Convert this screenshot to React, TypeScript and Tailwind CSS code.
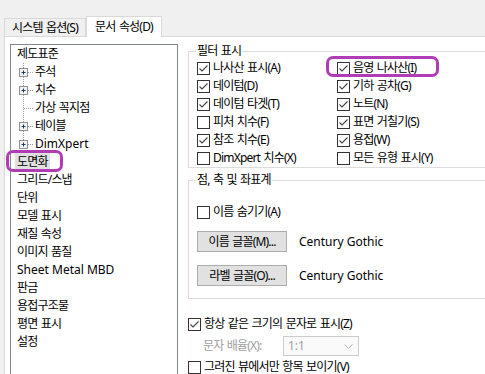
import React from 'react';

const KO = 'tracking-[-0.8px] [word-spacing:1px]';

type Item = { label: string; level: number; plus?: boolean; last?: boolean; latin?: boolean; selected?: boolean };

const tree: Item[] = [
  { label: '제도표준', level: 0 },
  { label: '주석', level: 1, plus: true },
  { label: '치수', level: 1, plus: true },
  { label: '가상 꼭지점', level: 1 },
  { label: '테이블', level: 1, plus: true },
  { label: 'DimXpert', level: 1, plus: true, last: true, latin: true },
  { label: '도면화', level: 0, selected: true },
  { label: '그리드/스냅', level: 0 },
  { label: '단위', level: 0 },
  { label: '모델 표시', level: 0 },
  { label: '재질 속성', level: 0 },
  { label: '이미지 품질', level: 0 },
  { label: 'Sheet Metal MBD', level: 0, latin: true },
  { label: '판금', level: 0 },
  { label: '용접구조물', level: 0 },
  { label: '평면 표시', level: 0 },
  { label: '설정', level: 0 },
];

const filterLeft: [string, boolean][] = [
  ['나사산 표시(A)', true],
  ['데이텀(D)', true],
  ['데이텀 타겟(T)', true],
  ['피처 치수(F)', false],
  ['참조 치수(E)', true],
  ['DimXpert 치수(X)', false],
];

const filterRight: [string, boolean][] = [
  ['음영 나사산(I)', true],
  ['기하 공차(G)', true],
  ['노트(N)', true],
  ['표면 거칠기(S)', true],
  ['용접(W)', true],
  ['모든 유형 표시(Y)', false],
];

const Check = ({ checked }: { checked?: boolean }) => (
  <span className="w-[13px] h-[13px] border border-[#333333] bg-white flex items-center justify-center shrink-0">
    {checked && (
      <svg width="11" height="11" viewBox="0 0 11 11">
        <polyline points="1.5,5.5 4,8 9.5,2.5" fill="none" stroke="#444" strokeWidth="1.1" />
      </svg>
    )}
  </span>
);

const CheckRow = ({ label, checked }: { label: string; checked?: boolean }) => (
  <div className="h-[18px] flex items-center gap-[3px]">
    <Check checked={checked} />
    <span className={KO}>{label}</span>
  </div>
);

const Connector = ({ plus, last }: { plus?: boolean; last?: boolean }) => (
  <svg width="24" height="18" className="shrink-0">
    <line x1="12.5" y1="0" x2="12.5" y2={last ? 9 : 18} stroke="#a0a0a0" strokeDasharray="1 1" />
    <line x1={plus ? 17 : 13} y1="9.5" x2="23" y2="9.5" stroke="#a0a0a0" strokeDasharray="1 1" />
    {plus && (
      <>
        <rect x="8.5" y="5.5" width="8" height="8" fill="#f2f2f2" stroke="#919191" />
        <path d="M10.5 9.5h4M12.5 7.5v4" stroke="#1e3c66" />
      </>
    )}
  </svg>
);

const FontButton = ({ label }: { label: string }) => (
  <div className="flex items-center">
    <div className={`w-[90px] h-[21px] bg-[#e1e1e1] border border-[#adadad] flex items-center justify-center ${KO}`}>
      {label}
    </div>
    <span className="ml-[12px]">Century Gothic</span>
  </div>
);

export default function App() {
  return (
    <div className="w-[485px] h-[374px] bg-[#f0f0f0] overflow-hidden relative flex flex-col text-[12px] text-black font-['Noto_Sans','Noto_Sans_CJK_KR',sans-serif]">
      {/* tabs */}
      <div className="h-[36px] flex items-end pl-[4px] shrink-0">
        <div className={`w-[82px] h-[18px] border border-b-0 border-[#d9d9d9] bg-[#f0f0f0] flex items-center justify-center ${KO}`}>
          시스템 옵션(S)
        </div>
        <div className={`relative z-10 -mb-px w-[76px] h-[21px] border border-b-0 border-[#d9d9d9] bg-white flex items-center justify-center ${KO}`}>
          문서 속성(D)
        </div>
      </div>

      {/* page */}
      <div className="flex-1 ml-[4px] border-l border-t border-[#d9d9d9] bg-white flex">
        {/* tree */}
        <div className="ml-[5px] mt-[7px] w-[168px] h-[400px] shrink-0 border border-[#828790]">
          {tree.map((it) => (
            <div key={it.label} className={`h-[18px] flex items-center ${it.level === 0 ? 'pl-[6px]' : ''}`}>
              {it.level === 1 && <Connector plus={it.plus} last={it.last} />}
              <span className={`${it.latin ? '' : KO} ${it.selected ? 'bg-[#e0e0e0] -ml-[2px] px-[2px]' : ''}`}>
                {it.label}
              </span>
            </div>
          ))}
        </div>

        {/* right side */}
        <div className="ml-[10px] w-[330px] shrink-0 flex flex-col">
          <fieldset className="mt-[6px] border border-[#dcdcdc]">
            <legend className={`ml-[7px] px-[1px] leading-[16px] ${KO}`}>필터 표시</legend>
            <div className="pl-[8px] grid grid-cols-[140px_1fr]">
              <div className="flex flex-col">
                {filterLeft.map(([l, c]) => (
                  <CheckRow key={l} label={l} checked={c} />
                ))}
              </div>
              <div className="flex flex-col">
                {filterRight.map(([l, c]) => (
                  <CheckRow key={l} label={l} checked={c} />
                ))}
              </div>
            </div>
          </fieldset>

          <fieldset className="mt-[4px] border border-[#dcdcdc] pb-[12px]">
            <legend className={`ml-[7px] px-[1px] leading-[16px] ${KO}`}>점, 축 및 좌표계</legend>
            <div className="pl-[8px] flex flex-col">
              <div className="mt-[15px]">
                <CheckRow label="이름 숨기기(A)" />
              </div>
              <div className="mt-[10px]">
                <FontButton label="이름 글꼴(M)..." />
              </div>
              <div className="mt-[13px]">
                <FontButton label="라벨 글꼴(O)..." />
              </div>
            </div>
          </fieldset>

          <div className="mt-[16px]">
            <CheckRow label="항상 같은 크기의 문자로 표시(Z)" checked />
          </div>
          <div className="mt-[3px] h-[20px] pl-[15px] flex items-center">
            <span className={`w-[80px] text-[#a0a0a0] ${KO}`}>문자 배율(X):</span>
            <div className="w-[76px] h-[20px] border border-[#cccccc] bg-[#fafafa] flex items-center justify-between pl-[4px] pr-[5px] text-[#a0a0a0]">
              <span>1:1</span>
              <svg width="9" height="5" viewBox="0 0 9 5">
                <polyline points="0.5,0.5 4.5,4.5 8.5,0.5" fill="none" stroke="#b0b0b0" />
              </svg>
            </div>
          </div>
          <div className="mt-[2px]">
            <CheckRow label="그려진 뷰에서만 항목 보이기(V)" />
          </div>
        </div>
      </div>

      {/* purple highlight marks */}
      <div className="absolute left-[6px] top-[150px] w-[57px] h-[22px] border-[3px] border-[#b23cb5] rounded-[7px]" />
      <div className="absolute left-[326px] top-[56px] w-[113px] h-[21px] border-[3px] border-[#b23cb5] rounded-[7px]" />
    </div>
  );
}
